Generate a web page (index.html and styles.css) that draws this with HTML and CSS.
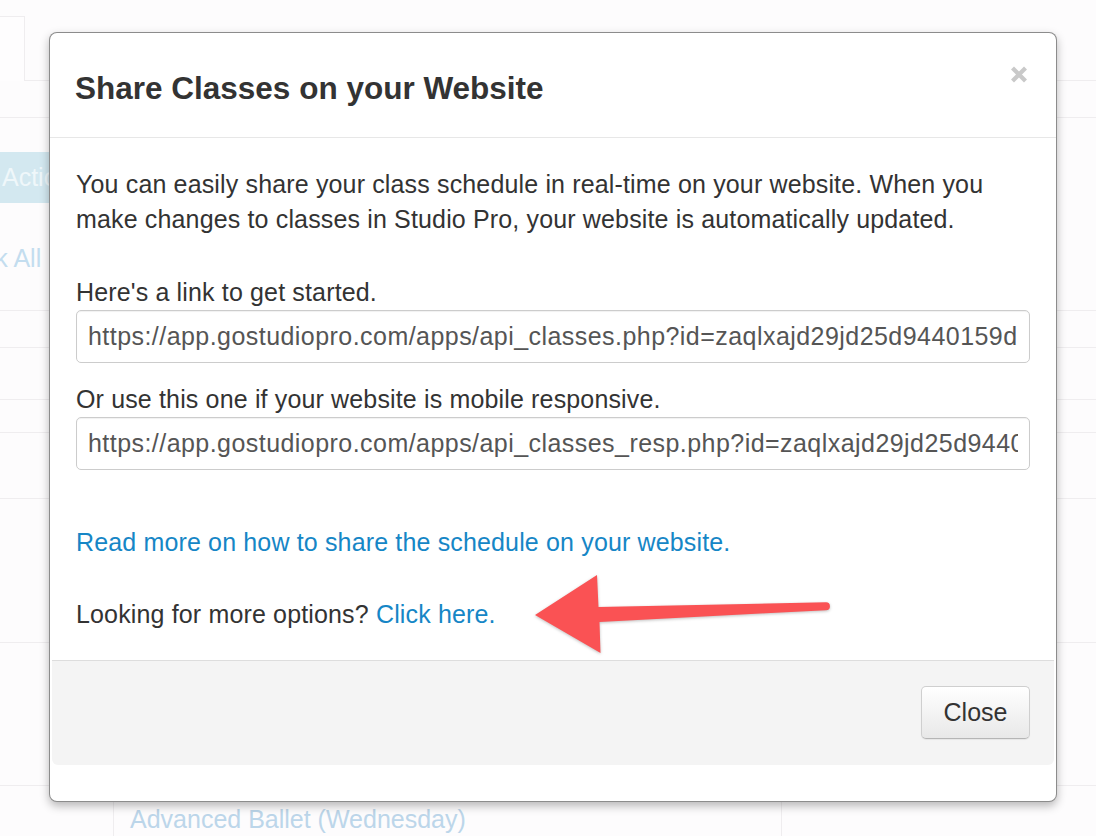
FILE: index.html
```html
<!DOCTYPE html>
<html lang="en">
<head>
<meta charset="utf-8">
<title>Share Classes on your Website</title>
<link rel="stylesheet" href="styles.css">
</head>
<body>
<div class="page">
  <div class="tabs">
    <div class="tab"></div>
  </div>
  <div class="toolbar"></div>
  <div class="actions-row">
    <div class="btn-actions">Actions</div>
    <a class="check-all">Check All</a>
  </div>
  <div class="row h36"></div>
  <div class="row h51"></div>
  <div class="row h32"></div>
  <div class="row h65"></div>
  <div class="row h143"></div>
  <div class="row h142"></div>
  <div class="row last">
    <div class="cell cell-a"></div>
    <div class="cell cell-b"><a class="class-link">Advanced Ballet (Wednesday)</a></div>
    <div class="cell cell-c"></div>
  </div>
</div>

<div class="modal">
  <div class="modal-header">
    <h3 class="modal-title">Share Classes on your Website</h3>
    <svg class="close-x" width="18" height="17" viewBox="0 0 18 17" aria-label="Close">
      <path d="M2.5 2 L15.5 15 M15.5 2 L2.5 15" stroke="#c9c9c9" stroke-width="4.2" stroke-linecap="butt"/>
    </svg>
  </div>
  <div class="modal-body">
    <p class="intro">You can easily share your class schedule in real-time on your website. When you make changes to classes in Studio Pro, your website is automatically updated.</p>
    <div class="field">
      <label class="field-label">Here's a link to get started.</label>
      <input class="field-input" type="text" readonly value="https://app.gostudiopro.com/apps/api_classes.php?id=zaqlxajd29jd25d9440159d2a7">
    </div>
    <div class="field">
      <label class="field-label">Or use this one if your website is mobile responsive.</label>
      <input class="field-input" type="text" readonly value="https://app.gostudiopro.com/apps/api_classes_resp.php?id=zaqlxajd29jd25d9440159d2a7">
    </div>
    <p class="read-more"><a class="link">Read more on how to share the schedule on your website.</a></p>
    <p class="more-options">Looking for more options? <a class="link">Click here.</a></p>
  </div>
  <div class="modal-footer">
    <button class="btn-close" type="button">Close</button>
  </div>
</div>

<svg class="arrow" width="320" height="100" viewBox="0 0 320 100">
  <path d="M15 50 L77 10 L78.5 42 L306 37.3 A3.9 3.9 0 0 1 306 45.2 L79.5 57 L80.5 88 Z" fill="#fa5254"/>
</svg>
</body>
</html>
```

FILE: styles.css
```css
html, body {
  margin: 0;
  padding: 0;
}

body {
  width: 1096px;
  height: 836px;
  overflow: hidden;
  position: relative;
  background: #fdfcfd;
  font-family: "Liberation Sans", Arial, sans-serif;
  font-size: 25px;
  line-height: 35px;
  color: #333;
}

/* ---------- faded page behind the dialog ---------- */
.page {
  width: 1096px;
}

.tabs {
  height: 80px;
  border-bottom: 1px solid #efedef;
  display: flex;
  align-items: flex-end;
}

.tab {
  width: 45px;
  height: 65px;
  margin-left: -20px;
  margin-bottom: -1px;
  background: #fefdfe;
  border-top: 1px solid #efedef;
  border-right: 1px solid #efedef;
  box-sizing: border-box;
}

.toolbar {
  height: 36px;
  border-bottom: 1px solid #efedef;
}

.actions-row {
  height: 192px;
  border-bottom: 1px solid #efedef;
  display: flex;
  flex-direction: column;
  align-items: flex-start;
}

.btn-actions {
  margin-top: 34px;
  margin-left: -11px;
  padding-left: 13px;
  width: 120px;
  height: 51px;
  line-height: 51px;
  background: #d3e8f0;
  color: #eff7fa;
  border-radius: 4px;
}

.check-all {
  margin-top: 38px;
  margin-left: -63px;
  color: #c3ddef;
  white-space: nowrap;
}

.row {
  border-bottom: 1px solid #efedef;
}

.h36 { height: 36px; }
.h51 { height: 51px; }
.h32 { height: 32px; }
.h65 { height: 65px; }
.h143 { height: 143px; }
.h142 { height: 142px; }

.row.last {
  display: flex;
  height: 60px;
  border-bottom: none;
}

.cell {
  height: 100%;
}

.cell-a {
  width: 113px;
  border-right: 1px solid #efedef;
}

.cell-b {
  width: 668px;
  border-right: 1px solid #efedef;
  padding: 16px 0 0 16px;
  box-sizing: border-box;
}

.class-link {
  color: #bcd6ea;
  white-space: nowrap;
}

/* ---------- dialog ---------- */
.modal {
  position: absolute;
  left: 49px;
  top: 32px;
  width: 1008px;
  box-sizing: border-box;
  background: #fff;
  border: 1px solid rgba(0, 0, 0, 0.45);
  border-radius: 8px;
  box-shadow: 0 4px 10px rgba(0, 0, 0, 0.28);
  padding-bottom: 36px;
}

.modal-header {
  height: 104px;
  padding: 0 27px 0 25px;
  border-bottom: 1px solid #e7e7e7;
  display: flex;
  align-items: center;
  justify-content: space-between;
}

.modal-title {
  margin: 6px 0 0 0;
  font-size: 31.5px;
  line-height: 34px;
  font-weight: bold;
  color: #333;
}

.close-x {
  align-self: flex-start;
  margin-top: 33px;
  margin-right: 1px;
}

.modal-body {
  padding: 29px 26px 28px 26px;
  letter-spacing: 0.15px;
}

.intro {
  margin: 0 0 38px 0;
}

.field {
  display: flex;
  flex-direction: column;
  margin-bottom: 19px;
}

.field + .field {
  margin-bottom: 55px;
}

.field-label {
  display: block;
  height: 35px;
}

.field-input {
  display: block;
  width: 100%;
  height: 53px;
  box-sizing: border-box;
  margin: 0;
  padding: 0 11px;
  border: 1px solid #cccccc;
  border-radius: 5px;
  background: #fff;
  box-shadow: inset 0 1px 1px rgba(0, 0, 0, 0.06);
  font-family: "Liberation Sans", Arial, sans-serif;
  font-size: 25px;
  letter-spacing: 0.45px;
  color: #555;
  outline: none;
}

.read-more {
  margin: 0 0 37px 0;
}

.more-options {
  margin: 0;
}

.link {
  color: #1686c6;
  text-decoration: none;
}

.modal-footer {
  margin: 0 2px;
  padding: 25px 24px 26px 24px;
  background: #f4f4f4;
  border-top: 1px solid #dddddd;
  border-radius: 0 0 6px 6px;
  display: flex;
  justify-content: flex-end;
}

.btn-close {
  width: 109px;
  height: 53px;
  margin: 0;
  padding: 0;
  border: 1px solid #cfcfcf;
  border-bottom-color: #b5b5b5;
  border-radius: 5px;
  background: linear-gradient(#ffffff, #e8e8e8);
  box-shadow: 0 1px 1px rgba(0, 0, 0, 0.06);
  font-family: "Liberation Sans", Arial, sans-serif;
  font-size: 25px;
  color: #333;
}

/* ---------- annotation arrow ---------- */
.arrow {
  position: absolute;
  left: 520px;
  top: 565px;
  filter: drop-shadow(0 1px 1.5px rgba(0, 0, 0, 0.25));
}
```
